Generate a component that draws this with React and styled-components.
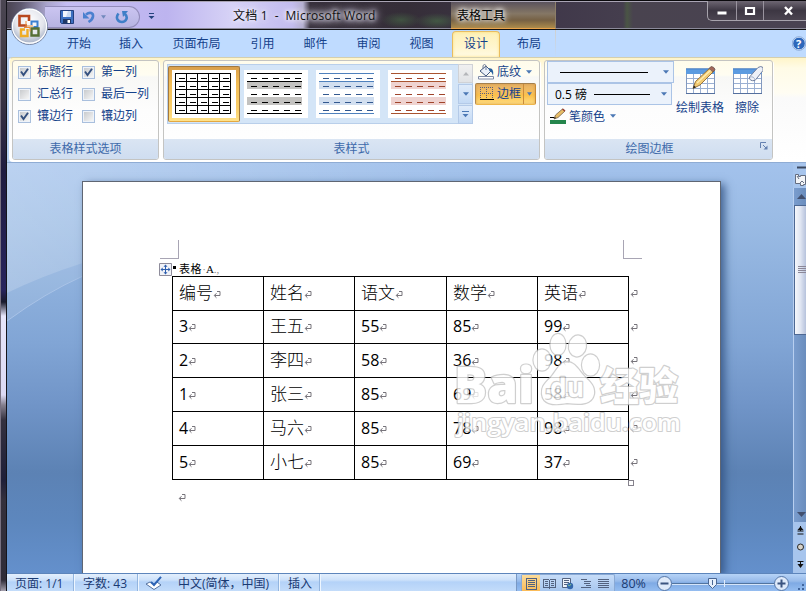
import React from 'react';
import styled, { createGlobalStyle } from 'styled-components';

const GlobalStyle = createGlobalStyle`
  * { box-sizing: border-box; }
  body {
    margin: 0;
    overflow: hidden;
    font-family: "Open Sans", "Noto Sans CJK SC", sans-serif;
    font-size: 12px;
    color: #15428b;
  }
  svg { display: block; flex: none; }
`;

const Window = styled.div`
  width: 806px;
  height: 591px;
  display: flex;
  overflow: hidden;
  position: relative;
  background: #17151c;
`;

const LeftEdge = styled.div`
  width: 7px;
  flex: none;
  border-left: 1px solid #777080;
  border-right: 1px solid #15151c;
  background: linear-gradient(#4b4652 0, #3d3744 85px, #1f1c40 170px, #28245c 290px, #191a2c 302px, #e6e5fa 316px, #dcdaf4 395px, #85808e 405px, #34313f 420px, #1f1f38 480px, #34303c 500px, #2f2c38 580px, #a5a1ae 591px);
`;

const Main = styled.div`
  flex: 1;
  min-width: 0;
  display: flex;
  flex-direction: column;
`;

/* title bar */

const TitleBar = styled.div`
  height: 30px;
  flex: none;
  display: flex;
  align-items: flex-start;
  border-top: 1px solid #0a090c;
  border-bottom: 1px solid #111;
  box-shadow: inset 0 1px 0 #a9a4b4, inset 0 -1px 0 #8b8a9a;
  background:
    radial-gradient(ellipse 20px 8px at 394px 19px, #4c7a4a77, transparent),
    radial-gradient(ellipse 22px 8px at 430px 20px, #4c7a4a88, transparent),
    linear-gradient(90deg, #4a4452 0, #5d586e 14px, #aaa5cd 40px, #c5bdf3 60px, #bdb4ef 160px, #d6d2f6 225px, #c2bbee 285px, #b5b0d0 296px, #37303c 303px, #352e38 400px, #40384a 540px, #453e4e 616px, #4a5545 620px, #49434f 626px, #4a4352 799px);
`;

const QuickAccess = styled.div`
  width: 95px;
  height: 22px;
  margin: 5px 0 0 38px;
  padding-left: 15px;
  display: flex;
  align-items: center;
  border: 1px solid #928cba;
  border-left: 0;
  border-radius: 0 11px 11px 0;
  background: linear-gradient(#cbc5f1, #b7b4e2);
`;

const Customize = styled.div`
  width: 20px;
  height: 29px;
  padding: 12px 0 0 8px;
`;

const TitleText = styled.div`
  width: 218px;
  height: 28px;
  margin-left: 73px;
  line-height: 29px;
  letter-spacing: 0.25px;
  color: #111;
  white-space: pre;
  text-shadow: 0 0 4px #fff, 0 0 6px #e8e4fa, 0 0 9px #e3dff6, 0 0 12px #ddd8f4;
`;

const ContextTitle = styled.div`
  width: 105px;
  height: 27px;
  margin-top: 1px;
  padding-left: 6px;
  line-height: 27px;
  color: #000;
  text-shadow: 0 0 4px #fff, 0 0 6px #fff, 0 0 9px #eee;
  border-bottom: 1px solid #eaa44c;
  border-right: 1px solid #8c7e68;
  background: linear-gradient(#5b535d 0, #857765 45%, #766144 70%, #ac8b4b);
`;

const WindowButtons = styled.div`
  width: 99px;
  height: 20px;
  margin-left: auto;
  display: flex;
  border: 1px solid #a7a3ac;
  border-top: 0;
  border-right: 0;
  border-radius: 0 0 0 5px;
  background: linear-gradient(#6d6672, #3d3743 50%, #4b4450);
`;

const WindowButton = styled.div`
  width: ${p => p.$width}px;
  flex: none;
  display: flex;
  align-items: center;
  justify-content: center;
  border-right: 1px solid #99939e;
  &:last-child {
    border-right: 0;
    padding-left: 6px;
  }
`;

const OfficeOrb = styled.div`
  position: absolute;
  left: 10px;
  top: 7px;
`;

/* tabs */

const TabBar = styled.div`
  height: 27px;
  flex: none;
  display: flex;
  align-items: flex-end;
  padding-left: 46px;
  background: #bfdbff;
`;

const Tab = styled.div`
  width: ${p => p.$width}px;
  height: 26px;
  text-align: center;
  line-height: 25px;
  ${p => p.$active && `
    margin-left: 4px;
    border: 1px solid #e8bd61;
    border-bottom: 0;
    border-radius: 4px 4px 0 0;
    background: linear-gradient(#fdf0b8, #fff6ce 60%, #fffbe4);
    box-shadow: inset 0 0 3px #ffdf77;
    line-height: 23px;
  `}
  ${p => p.$contextual && `
    height: 27px;
    padding-left: 3px;
    line-height: 27px;
    border-right: 1px solid;
    border-image: linear-gradient(#d0cfcd, #bfdbff) 1;
  `}
`;

const Help = styled.div`
  height: 27px;
  width: 14px;
  margin-left: auto;
  padding-top: 6px;
  overflow: hidden;
`;

/* ribbon */

const Ribbon = styled.div`
  height: 106px;
  flex: none;
  padding-left: 2px;
  background: #b6d0f2;
  border-bottom: 1px solid #8facd4;
`;

const RibbonBody = styled.div`
  height: 105px;
  display: flex;
  gap: 4px;
  padding: 2px 0 0 2px;
  border-top: 1px solid #d5cfae;
  border-bottom: 2px solid #fff;
  border-left: 1px solid #fff;
  border-radius: 4px 0 0 4px;
  background: linear-gradient(#fff5c9 0, #fffbe6 10px, #fffdf3 35px, #fafafa 40px, #fdfdfd 75px, #fff);
`;

const Group = styled.div`
  width: ${p => p.$width}px;
  display: flex;
  flex-direction: column;
  border: 1px solid #c4c4c2;
  border-radius: 3px;
  background: linear-gradient(#fffceb, #fffdf2 14px, #f8f8f6 16px, #fdfdfd 50px, #fff);
  box-shadow: 1px 1px 0 #fff;
`;

const GroupBody = styled.div`
  flex: 1;
  display: flex;
  min-height: 0;
`;

const GroupTitle = styled.div`
  height: 20px;
  flex: none;
  display: flex;
  align-items: center;
  justify-content: center;
  position: relative;
  padding-right: ${p => p.$shift || 0}px;
  color: #3e6aaa;
  line-height: 18px;
  border-radius: 0 0 2px 2px;
  background: linear-gradient(#dae5f3, #cfddf0);
`;

const Launcher = styled.div`
  position: absolute;
  right: 4px;
  top: 3px;
`;

const CheckGrid = styled.div`
  display: grid;
  grid-template-columns: 64px auto;
  grid-auto-rows: 22px;
  padding: 0 0 0 5px;
`;

const CheckItem = styled.div`
  display: flex;
  align-items: center;
  gap: 6px;
  white-space: nowrap;
  line-height: 22px;
`;

const Box = styled.div`
  width: 13px;
  height: 13px;
  border: 1px solid #a9bfdd;
  padding: 1px;
  background: linear-gradient(135deg, #c9cbce, #f6f6f6) content-box, #eef3fa;
`;

const Gallery = styled.div`
  width: 306px;
  height: 60px;
  margin: 3px 0 0 3px;
  display: flex;
  border: 1px solid #b9cfea;
  background: #d4e5f7;
`;

const Tile = styled.div`
  width: 72px;
  height: 56px;
  margin-top: 1px;
  padding: 4px;
  border-radius: 2px;
  ${p => p.$selected && `
    border: 1px solid #a2793f;
    border-bottom-color: #e4a840;
    padding: 3px;
    background: linear-gradient(#d99f4b, #f2bd57 30%, #fbd16e 80%, #ffe28b);
  `}
`;

const Spinner = styled.div`
  width: 15px;
  margin: -1px -1px -1px auto;
  display: flex;
  flex-direction: column;
  gap: 1px;
`;

const SpinButton = styled.div`
  flex: 1;
  display: flex;
  align-items: center;
  justify-content: center;
  border: 1px solid ${p => (p.$off ? '#d0d2d6' : '#b4cae8')};
  background: ${p => (p.$off ? 'linear-gradient(#f0f0f0, #e1e3e6)' : 'linear-gradient(#dfebfa, #c4daf5)')};
`;

const StyleButtons = styled.div`
  width: 62px;
  margin-left: 2px;
`;

const StyleButton = styled.div`
  height: 22px;
  width: 61px;
  display: flex;
  align-items: center;
  gap: ${p => (p.$active ? 3 : 2)}px;
  padding-left: ${p => (p.$active ? 4 : 2)}px;
  white-space: nowrap;
  line-height: 20px;
  border: 1px solid transparent;
  border-radius: 2px;
  span { width: 24px; }
  ${p => p.$active && `
    border-color: #a3804e #c88a36 #efb74b #b28a4f;
    background: linear-gradient(#e6b267, #f4bd5f 40%, #fbc04a 55%, #ffdd82);
    box-shadow: inset 0 0 3px #c8893999;
  `}
`;

const SplitCaret = styled.div`
  width: 12px;
  height: 100%;
  margin-left: -1px;
  display: flex;
  align-items: center;
  padding-left: 3px;
  border-left: 1px solid ${p => (p.$active ? '#c98c3c' : 'transparent')};
`;

const PenColumn = styled.div`
  width: 129px;
  padding-left: 2px;
`;

const Combo = styled.div`
  width: ${p => p.$width}px;
  height: 22px;
  display: flex;
  align-items: center;
  gap: 7px;
  padding: 0 4px 0 ${p => p.$indent}px;
  color: #000;
  border: 1px solid #abc4e6;
  background: #ebf2fb;
  svg { margin-left: auto; }
`;

const Stroke = styled.div`
  width: ${p => p.$width}px;
  height: 1px;
  background: #000;
`;

const PenColor = styled.div`
  height: 22px;
  display: flex;
  align-items: center;
  gap: 3px;
  padding-left: 3px;
  span { margin-right: 2px; }
`;

const BigButton = styled.div`
  width: ${p => p.$width}px;
  display: flex;
  flex-direction: column;
  align-items: center;
  padding-top: 5px;
  line-height: 16px;
  white-space: nowrap;
  svg { margin-bottom: 4px; }
`;

/* document area */

const Workspace = styled.div`
  flex: 1;
  min-height: 0;
  display: flex;
  position: relative;
  overflow: hidden;
  background: linear-gradient(#a3c2ec 0, #9abbe4 60px, #81a5d5 180px, #7195c8 240px, #5c82b4 310px, #5d87be 360px, #6490cc 410px);
`;

const Swoosh = styled.svg`
  position: absolute;
  left: 0;
  top: 0;
`;

const Canvas = styled.div`
  flex: 1;
  padding: 18px 0 0 75px;
  position: relative;
`;

const Page = styled.div`
  width: 639px;
  height: 392px;
  padding: 58px 70px 0 77px;
  border: 1px solid #5f6673;
  border-bottom: 0;
  background: #fff;
  box-shadow: 4px 3px 8px #30507fcc;
`;

const Corners = styled.div`
  width: 482px;
  height: 19px;
  display: flex;
  justify-content: space-between;
`;

const Corner = styled.div`
  width: 19px;
  height: 19px;
  border-bottom: 1px solid #a8a5b4;
  border-${p => p.$side}: 1px solid #a8a5b4;
`;

const Caption = styled.div`
  height: 17px;
  display: flex;
  align-items: center;
  margin: 0 0 0 -1px;
  padding-top: 3px;
  font-family: "Liberation Serif", "Noto Sans CJK SC", serif;
  font-size: 11px;
  line-height: 12px;
  color: #000;
  white-space: pre;
  i { width: 3px; height: 3px; margin: 0 3px 3px 1px; background: #000; }
  span { letter-spacing: 0.6px; }
  b { color: #888; font-weight: 400; }
`;

const DocTable = styled.div`
  width: 480px;
  margin-left: 12px;
  display: grid;
  grid-template-columns: 91px 91px 92px 91px 91px 24px;
  grid-template-rows: 34px 33px 34px 34px 34px 34px;
  color: #000;
`;

const Cell = styled.div`
  display: flex;
  align-items: center;
  padding: 0 0 2px 6px;
  border-left: 1px solid #000;
  border-top: 1px solid #000;
  line-height: 30px;
  font-weight: ${p => (p.$cjk ? 300 : 400)};
  font-size: ${p => (p.$cjk ? 17 : 16)}px;
  svg { margin-top: 3px; }
`;

const RowEnd = styled.div`
  display: flex;
  align-items: center;
  padding: 1px 0 0 1px;
  border-left: 1px solid #000;
`;

const TableFoot = styled.div`
  width: 457px;
  height: 30px;
  margin-left: 12px;
  padding: 13px 0 0 6px;
  border-top: 1px solid #000;
  display: flex;
  justify-content: space-between;
`;

const ResizeHandle = styled.div`
  width: 6px;
  height: 6px;
  margin: -13px -5px 0 0;
  border: 1px solid #85828c;
  background: #fff;
`;

const Watermark = styled.svg`
  position: absolute;
  left: 443px;
  top: 163px;
`;

const ScrollColumn = styled.div`
  width: 13px;
  flex: none;
  display: flex;
  flex-direction: column;
  position: relative;
  overflow: hidden;
  background: #a7c5ed;
`;

const Track = styled.div`
  height: 334px;
  display: flex;
  flex-direction: column;
  justify-content: space-between;
  border-left: 1px solid #b8cff0;
  background: linear-gradient(90deg, #7a9dce, #6a8dbd);
`;

const Thumb = styled.div`
  height: 130px;
  margin-bottom: auto;
  padding: 60px 0 0 3px;
  border: 1px solid #4d6893;
  border-right: 0;
  background: linear-gradient(90deg, #f5f7fb, #dfe5f2 50%, #b6c2dc);
`;

const ScrollArrow = styled.div`
  height: 17px;
  padding: 6px 0 0 3px;
`;

/* status bar */

const StatusBar = styled.div`
  height: 18px;
  flex: none;
  display: flex;
  color: #1a3a72;
  line-height: 19px;
  white-space: nowrap;
  border-top: 1px solid #5d85bb;
  background: linear-gradient(#e3effd, #cde1fa 6px, #b4d2f8 8px, #c3dcfa);
`;

const StatusItem = styled.div`
  width: ${p => p.$width}px;
  padding: 1px 0 0 ${p => p.$indent}px;
  display: flex;
  align-items: center;
  gap: 16px;
  border-right: 1px solid #93b5df;
  box-shadow: 1px 0 0 #eef6ff;
`;

const ViewPanel = styled.div`
  width: 290px;
  margin-left: auto;
  display: flex;
  align-items: center;
  padding-left: 4px;
  border-left: 1px solid #7998c3;
  background: linear-gradient(#b6d3f7, #98bbea 7px, #7faae4 9px, #95bdf0);
`;

const ViewButtons = styled.div`
  height: 17px;
  width: 95px;
  display: flex;
  border: 1px solid #8aa9d4;
  border-bottom: 0;
  border-radius: 2px 2px 0 0;
  background: linear-gradient(#c6dcf8, #a8c7ef);
`;

const ViewButton = styled.div`
  width: 18px;
  display: flex;
  align-items: center;
  justify-content: center;
  ${p => p.$active && 'background: linear-gradient(#fbdc9b, #fbbb57);'}
`;

const Percent = styled.div`
  width: 42px;
  padding: 1px 0 0 6px;
  font-size: 12.5px;
`;

const Caret = ({ color = '#4b78b5', w = 6 }) => (
  <svg width={w} height="4" viewBox="0 0 6 4" preserveAspectRatio="none"><path d="M0 0.3h6L3 3.8z" fill={color} /></svg>
);

const ReturnMark = () => (
  <svg width="8" height="9" viewBox="0 0 8 9" fill="none" stroke="#77747b">
    <path d="M4 1.500h3v4H1.500M3.500 3.200 1.200 5.500l2.300 2.300" />
    <path d="M2.500 4.500v2" />
  </svg>
);

const Orb = () => (
  <svg width="40" height="39" viewBox="0 0 40 39">
    <defs>
      <radialGradient id="orb" cx="50%" cy="35%" r="65%">
        <stop offset="0" stopColor="#fff" />
        <stop offset="0.6" stopColor="#e3e5ec" />
        <stop offset="0.9" stopColor="#aeb8cb" />
        <stop offset="1" stopColor="#f2f5fa" />
      </radialGradient>
    </defs>
    <circle cx="19.5" cy="19.5" r="18" fill="url(#orb)" stroke="#7786a4" />
    <circle cx="19.5" cy="19.2" r="17" fill="none" stroke="#fff" strokeWidth="1.2" />
    <path d="M17 18.500h-7.500v-9.500h9.500v5" fill="none" stroke="#b9481e" strokeWidth="2.600" />
    <path d="M21.500 18v-3.500h6v5.500h-4" fill="none" stroke="#3b7fcf" strokeWidth="2" />
    <path d="M17.500 22v7h-6.500v-6.500h4" fill="none" stroke="#efac25" strokeWidth="2.400" />
    <path d="M21.500 21.500h7v7h-7z" fill="none" stroke="#566f35" strokeWidth="2.400" />
    <path d="M16 14v5h7M14 20.500h6v4" fill="none" stroke="#e98a35" strokeWidth="1" />
  </svg>
);

const SaveIcon = () => (
  <svg width="14" height="14" viewBox="0 0 14 14">
    <path d="M0.500 0.500h13v13h-12l-1-1z" fill="#3b6fc0" stroke="#23407f" />
    <path d="M3 1h8v6H3z" fill="#f1f5fc" />
    <path d="M8 1h3v6H6z" fill="#c9daf1" />
    <path d="M3 9h8v4.500H3z" fill="#203765" />
    <path d="M7.500 10h2.500v3H7.500z" fill="#fff" />
  </svg>
);

const UndoIcon = () => (
  <svg width="14" height="14" viewBox="0 0 14 14" fill="none" stroke="#4a80cf">
    <path d="M4 4.500c4-3 7.500-1.500 7 2-.3 2.500-2 4-4.500 5.500" strokeWidth="2.600" />
    <path d="M1 2v6.500h6.500z" fill="#4a80cf" stroke="none" />
  </svg>
);

const RedoIcon = () => (
  <svg width="14" height="14" viewBox="0 0 14 14" fill="none" stroke="#3f7fc7">
    <path d="M3.500 3.500C0 8 3 12 7 12s6.500-4.500 3-8" strokeWidth="2.600" />
    <path d="M7 1h6L8 7z" fill="#3f7fc7" stroke="none" />
  </svg>
);

const GridThumb = () => (
  <svg width="64" height="48" viewBox="0 0 64 48" shapeRendering="crispEdges">
    <rect width="64" height="48" fill="#fff" />
    <path d="M3.500 3v41M14.500 3v41M25.500 3v41M36.500 3v41M47.500 3v41M58.500 3v41M3 3.500h56M3 11.500h56M3 19.500h56M3 27.500h56M3 35.500h56M3 43.500h56" stroke="#000" />
    <path d="M7 8.500h50M7 16.500h50M7 24.500h50M7 32.500h50M7 40.500h50" stroke="#000" strokeDasharray="6 5" />
  </svg>
);

const BandThumb = ({ line, dash, band }) => (
  <svg width="64" height="48" viewBox="0 0 64 48" shapeRendering="crispEdges">
    <rect width="64" height="48" fill="#fff" />
    <path d="M3 12h55v7H3zM3 27h55v8H3z" fill={band} />
    <path d="M3 3.500h55M3 11.500h55M3 43.500h55" stroke={line} />
    <path d="M7 8.500h51M7 16.500h51M7 24.500h51M7 32.500h51M7 40.500h51" stroke={dash} strokeDasharray="6 5" />
  </svg>
);

const ShadeIcon = () => (
  <svg width="17" height="16" viewBox="0 0 17 16">
    <path d="M0.500 12.500h15v2.500h-15z" fill="#fff" stroke="#7e8aa5" />
    <path d="M2 7l6-5 5 5-5 5z" fill="#eaf0f9" stroke="#44597e" />
    <path d="M5 5V1.500q1.500-2 3 0V6" fill="none" stroke="#6f7d98" />
    <path d="M10.500 4.500c4-1 5.500 3 4.500 7-1-3-1.500-3.500-3.500-4.500z" fill="#27609f" />
  </svg>
);

const BorderIcon = () => (
  <svg width="14" height="14" viewBox="0 0 14 14" shapeRendering="crispEdges">
    <path d="M0 .5h14M0 6.500h14M.5 0v12M6.500 0v12M12.500 0v12" stroke="#5d5f78" strokeDasharray="1 1" />
    <path d="M0 12.500h14" stroke="#000" strokeWidth="1" />
  </svg>
);

const PenIcon = () => (
  <svg width="16" height="16" viewBox="0 0 16 16">
    <path d="M0 12h16v4H0z" fill="#24854c" />
    <path d="M0 9.500h5" stroke="#000" />
    <path d="M4 11l1.500-4 7-6 2.500 2L8 9.500z" fill="#e8bd67" stroke="#76624a" strokeWidth=".8" />
    <path d="M12 1.500l1-1 2.500 2-1 1z" fill="#9a3c30" />
    <path d="M4 11l1-2 1 1z" fill="#222" />
  </svg>
);

const TableIcon = ({ tool }) => (
  <svg width="31" height="30" viewBox="0 0 31 30">
    <path d="M1.500 3.500h28v24h-28z" fill="#fff" stroke="#8299bf" />
    <path d="M1 3h29v5H1z" fill="#5c9be0" />
    <path d="M1 2.800h29" stroke="#3f77bf" />
    <path d="M8.500 8v19M15.500 8v19M22.500 8v19M2 12.500h27M2 17.500h27M2 22.500h27" stroke="#9bb0d2" />
    <path d="M1 27.500h29" stroke="#55709e" />
    {tool === 'pencil' ? (
      <>
        <path d="M8 22.500L10.500 15.500 25.500 1.500 29.500 4.500 15 19z" fill="#f3cb73" stroke="#8d6830" strokeWidth=".9" />
        <path d="M12 17L27 3" stroke="#fff0b5" strokeWidth="1.200" />
        <path d="M24 2.500l2-2q3 0 4 3l-2 2.500z" fill="#a4685a" stroke="#6a554f" strokeWidth=".7" />
        <path d="M8 22.500l.8-3 2.200 1.700z" fill="#222" />
      </>
    ) : (
      <>
        <path d="M17.500 11L26 1.500q3-2 5 0v3L23 14.500q-6 1-5.500-3.500z" fill="#eef1f8" stroke="#707f9e" />
        <path d="M18 11q4-1 5 3" fill="none" stroke="#a5b1c9" />
      </>
    )}
  </svg>
);

const galleryStyles = [
  { line: '#000', dash: '#000', band: '#c3c2c0' },
  { line: '#4f81bd', dash: '#33588f', band: '#d2dff0' },
  { line: '#a9532f', dash: '#a0442b', band: '#efd3d0' },
];

const tabs = [
  ['开始', 52], ['插入', 52], ['页面布局', 79], ['引用', 53], ['邮件', 53],
  ['审阅', 53], ['视图', 53], ['设计', 48, 'active'], ['布局', 56, 'contextual'],
];

const options = [
  ['标题行', true], ['第一列', true],
  ['汇总行', false], ['最后一列', false],
  ['镶边行', true], ['镶边列', false],
];

const rows = [
  ['编号', '姓名', '语文', '数学', '英语'],
  ['3', '王五', '55', '85', '99'],
  ['2', '李四', '58', '36', '98'],
  ['1', '张三', '85', '69', '58'],
  ['4', '马六', '85', '78', '98'],
  ['5', '小七', '85', '69', '37'],
];

const Title = () => (
  <TitleBar>
    <QuickAccess>
      <SaveIcon />
      <svg width="8" height="1" />
      <UndoIcon />
      <svg width="5" height="1" />
      <Caret color="#7189bc" w={5} />
      <svg width="9" height="1" />
      <RedoIcon />
    </QuickAccess>
    <Customize>
      <svg width="7" height="7" viewBox="0 0 7 7"><path d="M1 .5h5" stroke="#25437e" /><path d="M.5 3h6L3.500 6z" fill="#25437e" /></svg>
    </Customize>
    <TitleText>文档 1  -  Microsoft Word</TitleText>
    <ContextTitle>表格工具</ContextTitle>
    <WindowButtons>
      <WindowButton $width={29}>
        <svg width="12" height="10"><path d="M1.500 5.500h9v3h-9z" fill="#fff" /></svg>
      </WindowButton>
      <WindowButton $width={27}>
        <svg width="12" height="10"><path d="M2 2h8v6H2z" fill="none" stroke="#fff" strokeWidth="2.200" /></svg>
      </WindowButton>
      <WindowButton $width={43}>
        <svg width="12" height="10"><path d="M2 1l7 7.500M9 1L2 8.500" stroke="#fff" strokeWidth="2.400" /></svg>
      </WindowButton>
    </WindowButtons>
  </TitleBar>
);

const OptionsGroup = () => (
  <Group $width={147}>
    <GroupBody>
      <CheckGrid>
        {options.map(([label, checked]) => (
          <CheckItem key={label}>
            <Box>
              {checked && <svg width="9" height="9" viewBox="0 0 9 9"><path d="M1 3.500L3.500 7 8 .8" fill="none" stroke="#34507f" strokeWidth="1.900" /></svg>}
            </Box>
            {label}
          </CheckItem>
        ))}
      </CheckGrid>
    </GroupBody>
    <GroupTitle>表格样式选项</GroupTitle>
  </Group>
);

const StylesGroup = () => (
  <Group $width={377}>
    <GroupBody>
      <Gallery>
        <Tile $selected><GridThumb /></Tile>
        {galleryStyles.map(s => <Tile key={s.line}><BandThumb {...s} /></Tile>)}
        <Spinner>
          <SpinButton $off><svg width="6" height="4"><path d="M0 3.500h6L3 0z" fill="#b4b6ba" /></svg></SpinButton>
          <SpinButton><Caret /></SpinButton>
          <SpinButton><svg width="7" height="7"><path d="M0 .5h7" stroke="#4b78b5" /><path d="M.5 3h6L3.500 6.300z" fill="#4b78b5" /></svg></SpinButton>
        </Spinner>
      </Gallery>
      <StyleButtons>
        <StyleButton>
          <ShadeIcon /><span>底纹</span><SplitCaret><Caret /></SplitCaret>
        </StyleButton>
        <StyleButton $active>
          <BorderIcon /><span>边框</span><SplitCaret $active><Caret w={5} /></SplitCaret>
        </StyleButton>
      </StyleButtons>
    </GroupBody>
    <GroupTitle>表样式</GroupTitle>
  </Group>
);

const DrawGroup = () => (
  <Group $width={229}>
    <GroupBody>
      <PenColumn>
        <Combo $width={127} $indent={12}><Stroke $width={88} /><Caret /></Combo>
        <Combo $width={125} $indent={7}>0.5 磅<Stroke $width={56} /><Caret /></Combo>
        <PenColor><PenIcon /><span>笔颜色</span><Caret /></PenColor>
      </PenColumn>
      <BigButton $width={52}><TableIcon tool="pencil" />绘制表格</BigButton>
      <BigButton $width={42}><TableIcon tool="eraser" />擦除</BigButton>
    </GroupBody>
    <GroupTitle $shift={18}>
      绘图边框
      <Launcher>
        <svg width="8" height="8" viewBox="0 0 8 8" fill="none" stroke="#6581b1"><path d="M.5 6V.5H6M3 3l3.500 3.500" /><path d="M7.500 3.500v4h-4z" fill="#6581b1" stroke="none" /></svg>
      </Launcher>
    </GroupTitle>
  </Group>
);

const BaiduMark = () => (
  <Watermark width="240" height="115" viewBox="450 326 240 115">
    <g fill="#fff" stroke="#c4c4c4" strokeWidth="2.400" strokeLinejoin="round" paintOrder="stroke" opacity=".8">
      <ellipse cx="542" cy="360" rx="8.500" ry="10.500" />
      <ellipse cx="558" cy="344.500" rx="7.500" ry="10.500" />
      <ellipse cx="577.500" cy="346" rx="8.500" ry="10.500" transform="rotate(10 577.500 346)" />
      <ellipse cx="590.500" cy="365" rx="8.500" ry="10.500" />
      <path d="M567 362c8 0 12 9 17 14 6 6 11 10 10 18-2 10-12 11-27 9-16 3-24 0-25-9-1-9 5-12 10-18s8-14 15-14z" />
      <text x="454" y="402.500" fontFamily="Open Sans, sans-serif" fontWeight="800" fontSize="49" textLength="80" lengthAdjust="spacingAndGlyphs">Bai</text>
      <text x="550" y="397" fontFamily="Open Sans, sans-serif" fontWeight="700" fontSize="27" textLength="34" lengthAdjust="spacingAndGlyphs">du</text>
      <text x="600" y="400" fontFamily="Noto Sans CJK SC, sans-serif" fontWeight="900" fontSize="39" textLength="78" lengthAdjust="spacingAndGlyphs">经验</text>
      <text x="457" y="431" fontFamily="Open Sans, sans-serif" fontWeight="600" fontSize="24" strokeWidth="2" textLength="224" lengthAdjust="spacingAndGlyphs">jingyan.baidu.com</text>
    </g>
  </Watermark>
);

const Document = () => (
  <Workspace>
    <Swoosh width="786" height="410" viewBox="0 0 786 410">
      <defs>
        <linearGradient id="sky">
          <stop offset="0" stopColor="#fff" stopOpacity=".26" />
          <stop offset="0.6" stopColor="#fff" stopOpacity="0" />
        </linearGradient>
      </defs>
      <path d="M0 0h786v10L300 60L76 100Q35 113 0 130z" fill="url(#sky)" />
      <path d="M0 130Q35 113 76 100v13Q35 132 0 158z" fill="#fff" opacity=".1" />
      <path d="M0 158Q38 130 76 113" fill="none" stroke="#a9c3e7" />
    </Swoosh>
    <Canvas>
      <Page>
        <Corners><Corner $side="right" /><Corner $side="left" /></Corners>
        <Caption>
          <svg width="13" height="13" viewBox="0 0 13 13">
            <path d="M.5.5h12v12H.5z" fill="#f1f3f8" stroke="#8e8c9b" />
            <path d="M6.500 2v9M2 6.500h9" stroke="#2e5fae" />
            <path d="M6.500 1.500l2 2.200h-4zM6.500 11.500l2-2.200h-4zM1.500 6.500l2.200-2v4zM11.500 6.500l-2.200-2v4z" fill="#2e5fae" />
          </svg>
          <i /><span>表格</span><b>·</b>A<b>.,</b>
        </Caption>
        <DocTable>
          {rows.map((row, r) => (
            <React.Fragment key={r}>
              {row.map((value, c) => (
                <Cell key={c} $cjk={/[^0-9]/.test(value)}>{value}<ReturnMark /></Cell>
              ))}
              <RowEnd><ReturnMark /></RowEnd>
            </React.Fragment>
          ))}
        </DocTable>
        <TableFoot><ReturnMark /><ResizeHandle /></TableFoot>
      </Page>
      <BaiduMark />
    </Canvas>
    <ScrollColumn>
      <svg width="13" height="25" viewBox="0 0 13 25">
        <path d="M4 4.500h9" stroke="#3b4860" strokeWidth="2" />
        <path d="M2.500 11.500h3v2h2v-1h5v9h-2v1h-3v-2h-5z" fill="#f3f5f8" stroke="#646d80" />
        <path d="M4 13l2 3M7 20l2-2 2 2" stroke="#646d80" fill="none" />
      </svg>
      <Track>
        <ScrollArrow><svg width="10" height="6"><path d="M0 5h9L4.500 0z" fill="#42506f" /></svg></ScrollArrow>
        <Thumb>
          <svg width="9" height="9"><path d="M0 .5h9M0 2.500h9M0 4.500h9M0 6.500h9" stroke="#8b8798" /></svg>
        </Thumb>
        <ScrollArrow><svg width="10" height="6"><path d="M0 1h9L4.500 6z" fill="#42506f" /></svg></ScrollArrow>
      </Track>
      <svg width="13" height="51" viewBox="0 0 13 51">
        <path d="M4.500 9h6M7.500 4v5M4.500 12h6" stroke="#111" />
        <path d="M4.500 8L7.500 4.500l3 3.500z" fill="#111" />
        <circle cx="7.500" cy="25" r="3" fill="#d7d3ca" stroke="#292929" />
        <path d="M4.500 39.500h6M7.500 40v5" stroke="#111" />
        <path d="M4.500 42L7.500 46l3-4z" fill="#111" />
      </svg>
    </ScrollColumn>
  </Workspace>
);

const lines = d => (
  <svg width="13" height="13" viewBox="0 0 13 13" shapeRendering="crispEdges"><path d={d} stroke="#53627f" fill="none" /></svg>
);

const Status = () => (
  <StatusBar>
    <StatusItem $width={67} $indent={8}>页面: 1/1</StatusItem>
    <StatusItem $width={64} $indent={9}>字数: 43</StatusItem>
    <StatusItem $width={141} $indent={8}>
      <svg width="16" height="14" viewBox="0 0 16 14">
        <path d="M0 8l4-2 4 2 3-2 4 3-7 4.500z" fill="#fff" stroke="#54719f" />
        <path d="M5 6l3 3L15 .8" fill="none" stroke="#2e64b5" strokeWidth="2" />
      </svg>
      中文(简体，中国)
    </StatusItem>
    <StatusItem $width={41} $indent={9}>插入</StatusItem>
    <ViewPanel>
      <ViewButtons>
        <ViewButton $active>{lines('M1.500 1.500h10v11h-10zM3 3.500h7M3 5.500h7M3 7.500h7M3 9.500h7')}</ViewButton>
        <ViewButton>{lines('M.5 2.500h5l1 1 1-1h5v8h-5l-1 1-1-1h-5zM6.500 3v9M2 4.500h3M2 6.500h3M2 8.500h3M8 4.500h3M8 6.500h3M8 8.500h3')}</ViewButton>
        <ViewButton>
          <svg width="13" height="13" viewBox="0 0 13 13"><path d="M1.500 1.500h8v9h-8zM3 3.500h5M3 5.500h5M3 7.500h3" fill="#eef3fa" stroke="#53627f" /><circle cx="9" cy="9" r="3.200" fill="#3467aa" /><path d="M7 8q2 2 3-1" stroke="#7fc08a" fill="none" /></svg>
        </ViewButton>
        <ViewButton>{lines('M2 2.500h6M5 4.500h7M5 6.500h6M7 8.500h5M2 10.500h10')}</ViewButton>
        <ViewButton>{lines('M1 2.500h11M1 4.500h11M1 6.500h11M1 8.500h11M1 10.500h11')}</ViewButton>
      </ViewButtons>
      <Percent>80%</Percent>
      <svg width="149" height="17" viewBox="0 0 149 17">
        <path d="M15 9.500h103" stroke="#52749f" />
        <path d="M15 10.500h103" stroke="#d5e5fa" />
        <path d="M67.500 6v7" stroke="#e1ecfb" />
        <circle cx="7.500" cy="9.500" r="7" fill="#dfeafa" stroke="#5577a8" />
        <path d="M3.500 9.500h8" stroke="#3b5480" strokeWidth="2" />
        <path d="M51.500 4.500h8v6l-4 4-4-4z" fill="#e5effc" stroke="#4a6795" />
        <path d="M55.500 6v5" stroke="#4a6795" />
        <circle cx="124.500" cy="9.500" r="7" fill="#dfeafa" stroke="#5577a8" />
        <path d="M120.500 9.500h8M124.500 5.500v8" stroke="#3b5480" strokeWidth="2" />
        <path d="M145 10h2v2h-2zM145 14h2v2h-2zM141 14h2v2h-2z" fill="#41669d" />
      </svg>
    </ViewPanel>
  </StatusBar>
);

export default function App() {
  return (
    <>
      <GlobalStyle />
      <Window>
        <LeftEdge />
        <Main>
          <Title />
          <TabBar>
            {tabs.map(([label, width, kind]) => (
              <Tab key={label} $width={width} $active={kind === 'active'} $contextual={kind === 'contextual'}>{label}</Tab>
            ))}
            <Help>
              <svg width="15" height="15" viewBox="0 0 15 15">
                <circle cx="7" cy="7.500" r="6.300" fill="#2e68bb" stroke="#cfdff5" />
                <circle cx="7" cy="7.500" r="6.800" fill="none" stroke="#6b8fc6" strokeWidth=".6" />
                <text x="4" y="12" fontSize="11" fontWeight="700" fill="#fff">?</text>
              </svg>
            </Help>
          </TabBar>
          <Ribbon>
            <RibbonBody>
              <OptionsGroup />
              <StylesGroup />
              <DrawGroup />
            </RibbonBody>
          </Ribbon>
          <Document />
          <Status />
        </Main>
        <OfficeOrb><Orb /></OfficeOrb>
      </Window>
    </>
  );
}
